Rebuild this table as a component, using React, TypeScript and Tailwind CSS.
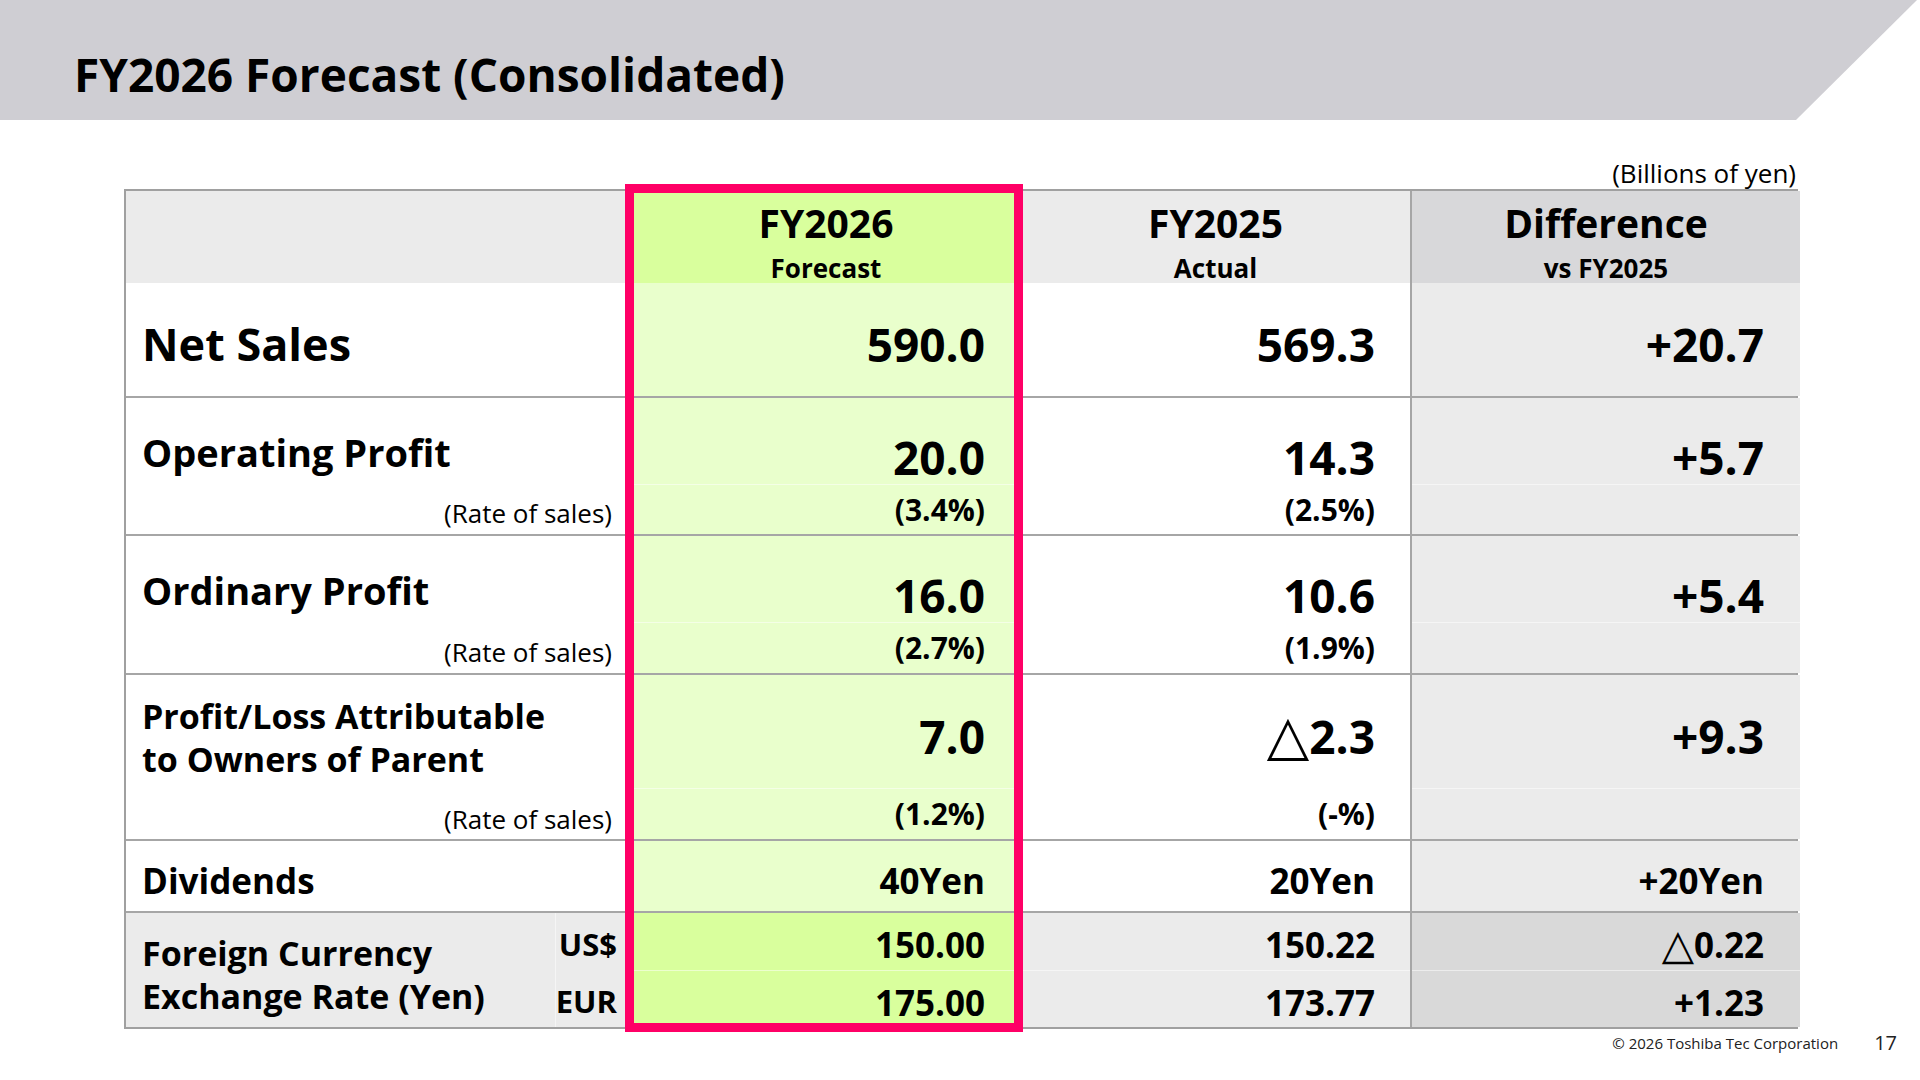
import React from "react";

const COLS = "grid grid-cols-[505px_390px_389px_390px]";
const LINE = "border-b-2 border-[#A6A6A6]";
const DIFF_L = "border-l-2 border-[#A6A6A6]";
const FAINT = "border-t border-white/50";

const Tri = () => <span className="font-['DejaVu_Sans',sans-serif] font-normal text-[1.2em] leading-none">△</span>;

const HeadCell = ({ bg, title, sub }: { bg: string; title: string; sub: string }) => (
  <div className={`flex flex-col items-center ${bg}`}>
    <div className="mt-[12px] h-[40px] leading-[40px] text-[39px] font-bold">{title}</div>
    <div className="mt-[10px] h-[30px] leading-[30px] text-[26px] font-bold">{sub}</div>
  </div>
);

// value cell with a main figure and a rate line below
const TwoTier = ({
  bg,
  pr,
  main,
  sub,
  top,
  pt,
}: {
  bg: string;
  pr: string;
  main: React.ReactNode;
  sub?: React.ReactNode;
  top: string;
  pt: string;
}) => (
  <div className={`flex flex-col ${bg}`}>
    <div className={`${top} ${pt}`}>
      <div className={`h-[54px] flex items-center justify-end ${pr} text-[46px] font-bold leading-none`}>{main}</div>
    </div>
    <div className={`flex-1 flex items-center justify-end ${pr} ${FAINT} text-[30px] font-bold leading-none`}>{sub}</div>
  </div>
);

const rows = [
  { label: "Operating Profit", fc: "20.0", fcp: "(3.4%)", ac: "14.3", acp: "(2.5%)", diff: "+5.7", h: "h-[138px]" },
  { label: "Ordinary Profit", fc: "16.0", fcp: "(2.7%)", ac: "10.6", acp: "(1.9%)", diff: "+5.4", h: "h-[139px]" },
];

export default function App() {
  return (
    <div className="w-[1920px] h-[1080px] bg-white text-black font-['Open_Sans','Noto_Sans',sans-serif] overflow-hidden">
      {/* title band */}
      <div className="h-[120px] bg-[#CFCED3] [clip-path:polygon(0_0,1917px_0,1796px_120px,0_120px)] flex items-center pl-[74px] pt-[28px]">
        <h1 className="text-[46px] font-bold leading-none">FY2026 Forecast (Consolidated)</h1>
      </div>

      <div className="ml-[124px] w-[1674px] mt-[38px] h-[30px] leading-[30px] text-right text-[26px] pr-[2px]">
        (Billions of yen)
      </div>

      <div className="relative ml-[124px] mt-[1px] w-[1674px] border-2 border-[#A0A0A0]">
        {/* header */}
        <div className={`${COLS} h-[92px] ${LINE}`}>
          <div className="bg-[#EBEBEB]" />
          <HeadCell bg="bg-[#D9FF9D]" title="FY2026" sub="Forecast" />
          <HeadCell bg="bg-[#EBEBEB]" title="FY2025" sub="Actual" />
          <HeadCell bg={`bg-[#D8D8DA] ${DIFF_L}`} title="Difference" sub="vs FY2025" />
        </div>

        {/* net sales */}
        <div className={`${COLS} h-[115px] ${LINE} text-[46px] font-bold leading-none`}>
          <div className="flex items-center pl-[16px] pt-[8px] text-[45px]">Net Sales</div>
          <div className="flex items-center justify-end pr-[36px] pt-[8px] bg-[#E9FFCC]">590.0</div>
          <div className="flex items-center justify-end pr-[35px] pt-[8px]">569.3</div>
          <div className={`flex items-center justify-end pr-[36px] pt-[8px] bg-[#EBEBEB] ${DIFF_L}`}>+20.7</div>
        </div>

        {rows.map(r => (
          <div key={r.label} className={`${COLS} ${r.h} ${LINE}`}>
            <div className="flex flex-col">
              <div className="h-[86px] pt-[32px] pl-[16px]">
                <div className="h-[44px] flex items-center text-[38px] font-bold leading-none">{r.label}</div>
              </div>
              <div className="flex-1 pt-[8px] pr-[19px] flex items-center justify-end text-[26px] leading-none">(Rate of sales)</div>
            </div>
            <TwoTier bg="bg-[#E9FFCC]" pr="pr-[36px]" main={r.fc} sub={r.fcp} top="h-[86px]" pt="pt-[32px]" />
            <TwoTier bg="bg-white" pr="pr-[35px]" main={r.ac} sub={r.acp} top="h-[86px]" pt="pt-[32px]" />
            <TwoTier bg={`bg-[#EBEBEB] ${DIFF_L}`} pr="pr-[36px]" main={r.diff} top="h-[86px]" pt="pt-[32px]" />
          </div>
        ))}

        {/* profit attributable */}
        <div className={`${COLS} h-[166px] ${LINE}`}>
          <div className="flex flex-col">
            <div className="h-[113px] pt-[20px] pl-[16px] text-[34px] font-bold leading-[43px]">
              Profit/Loss Attributable
              <br />
              to Owners of Parent
            </div>
            <div className="flex-1 pt-[10px] pr-[19px] flex items-center justify-end text-[26px] leading-none">(Rate of sales)</div>
          </div>
          <TwoTier bg="bg-[#E9FFCC]" pr="pr-[36px]" main="7.0" sub="(1.2%)" top="h-[113px]" pt="pt-[34px]" />
          <TwoTier
            bg="bg-white"
            pr="pr-[35px]"
            main={
              <>
                <Tri />
                2.3
              </>
            }
            sub="(-%)"
            top="h-[113px]"
            pt="pt-[34px]"
          />
          <TwoTier bg={`bg-[#EBEBEB] ${DIFF_L}`} pr="pr-[36px]" main="+9.3" top="h-[113px]" pt="pt-[34px]" />
        </div>

        {/* dividends */}
        <div className={`${COLS} h-[72px] ${LINE} text-[35px] font-bold leading-none`}>
          <div className="flex items-center pl-[16px] pt-[8px]">Dividends</div>
          <div className="flex items-center justify-end pr-[36px] pt-[8px] bg-[#E9FFCC]">40Yen</div>
          <div className="flex items-center justify-end pr-[35px] pt-[8px]">20Yen</div>
          <div className={`flex items-center justify-end pr-[36px] pt-[8px] bg-[#EBEBEB] ${DIFF_L}`}>+20Yen</div>
        </div>

        {/* exchange rates */}
        <div className={`${COLS} h-[114px] font-bold leading-none`}>
          <div className="flex bg-[#EBEBEB]">
            <div className="flex-1 pl-[16px] pt-[19px] text-[34px] leading-[43px]">
              Foreign Currency
              <br />
              Exchange Rate (Yen)
            </div>
            <div className="w-[76px] flex flex-col border-l border-white/50 text-[31px]">
              <div className="h-[57px] pt-[6px] pr-[14px] flex items-center justify-end">US$</div>
              <div className="flex-1 pt-[6px] pr-[14px] flex items-center justify-end">EUR</div>
            </div>
          </div>
          <div className="flex flex-col bg-[#D9FF9D] text-[35px]">
            <div className="h-[57px] pt-[6px] pr-[36px] flex items-center justify-end">150.00</div>
            <div className={`flex-1 pt-[6px] pr-[36px] flex items-center justify-end ${FAINT}`}>175.00</div>
          </div>
          <div className="flex flex-col bg-[#EBEBEB] text-[35px]">
            <div className="h-[57px] pt-[6px] pr-[35px] flex items-center justify-end">150.22</div>
            <div className={`flex-1 pt-[6px] pr-[35px] flex items-center justify-end ${FAINT}`}>173.77</div>
          </div>
          <div className={`flex flex-col bg-[#D9D9D9] text-[35px] ${DIFF_L}`}>
            <div className="h-[57px] pt-[6px] pr-[36px] flex items-center justify-end">
              <Tri />
              0.22
            </div>
            <div className={`flex-1 pt-[6px] pr-[36px] flex items-center justify-end ${FAINT}`}>+1.23</div>
          </div>
        </div>

        {/* forecast highlight frame */}
        <div className="absolute left-[499px] top-[-7px] w-[398px] h-[848px] border-[9px] border-[#FF0066] pointer-events-none" />
      </div>

      <div className="flex justify-end items-center h-[28px] pr-[23px]">
        <span className="text-[15px] text-[#222]">© 2026 Toshiba Tec Corporation</span>
        <span className="ml-[36px] text-[20px] text-[#222]">17</span>
      </div>
    </div>
  );
}
